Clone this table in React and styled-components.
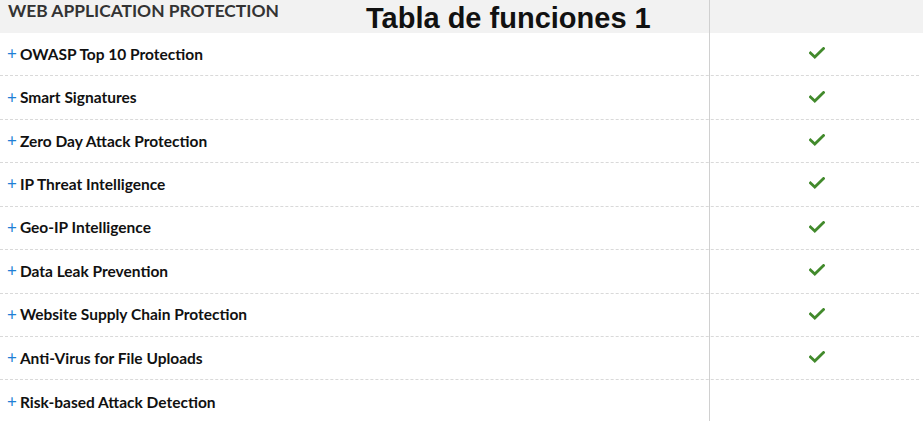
import React from "react";
import styled, { createGlobalStyle } from "styled-components";

const FEATURES = [
  { name: "OWASP Top 10 Protection", included: true },
  { name: "Smart Signatures", included: true },
  { name: "Zero Day Attack Protection", included: true },
  { name: "IP Threat Intelligence", included: true },
  { name: "Geo-IP Intelligence", included: true },
  { name: "Data Leak Prevention", included: true },
  { name: "Website Supply Chain Protection", included: true },
  { name: "Anti-Virus for File Uploads", included: true },
  { name: "Risk-based Attack Detection", included: false },
];

const GlobalStyle = createGlobalStyle`
  html, body {
    margin: 0;
    padding: 0;
    background: #fff;
  }
  body {
    font-family: Lato, "Open Sans", sans-serif;
  }
`;

const CheckIcon = () => (
  <svg width="16" height="12" viewBox="0 0 16 12">
    <polyline
      points="1.5,6 5.8,10 14.5,1.5"
      fill="none"
      stroke="#428a2c"
      strokeWidth="2.8"
      strokeLinecap="square"
    />
  </svg>
);

export default function App() {
  return (
    <>
      <GlobalStyle />
      <Page>
        <Title>Tabla de funciones 1</Title>
        <Table>
          <HeaderRow>
            <HeaderCell>Web Application Protection</HeaderCell>
            <MarkCell />
          </HeaderRow>
          {FEATURES.map((feature, i) => (
            <Row key={feature.name} last={i === FEATURES.length - 1}>
              <NameCell>
                <Plus>+</Plus>
                {feature.name}
              </NameCell>
              <MarkCell>{feature.included && <CheckIcon />}</MarkCell>
            </Row>
          ))}
        </Table>
      </Page>
    </>
  );
}

const Page = styled.div`
  position: relative;
  width: 923px;
  height: 421px;
  overflow: hidden;
`;

const Title = styled.div`
  position: absolute;
  top: 0;
  left: 366px;
  font-family: "Liberation Sans", Arial, sans-serif;
  font-weight: 700;
  font-size: 29px;
  line-height: 36px;
  color: #111;
`;

const Table = styled.div`
  display: grid;
  grid-template-columns: 1fr;
  width: 923px;
`;

const HeaderRow = styled.div`
  display: grid;
  grid-template-columns: 710px 1fr;
  height: 33px;
  background: #f2f2f2;
`;

const HeaderCell = styled.div`
  padding: 0 0 0 8px;
  font-size: 17.4px;
  font-weight: 700;
  text-transform: uppercase;
  color: #333;
  line-height: 22px;
  border-right: 1px solid #d0d0d0;
`;

const Row = styled.div`
  display: grid;
  grid-template-columns: 710px 1fr;
  height: 43.43px;
  box-sizing: border-box;
  border-bottom: ${(p) => (p.last ? "none" : "1px dashed #d9d9d9")};
  margin-right: 4px;
`;

const NameCell = styled.div`
  display: flex;
  align-items: center;
  padding: 0 0 2px 7px;
  font-size: 15.5px;
  font-weight: 700;
  color: #111;
  border-right: 1px solid #d0d0d0;
  margin-bottom: -1px;
`;

const Plus = styled.span`
  color: #1f7fd6;
  font-weight: 400;
  font-size: 17px;
  margin-right: 3px;
`;

const MarkCell = styled.div`
  display: flex;
  align-items: center;
  justify-content: center;
  padding: 0 0 2px 4px;
`;
